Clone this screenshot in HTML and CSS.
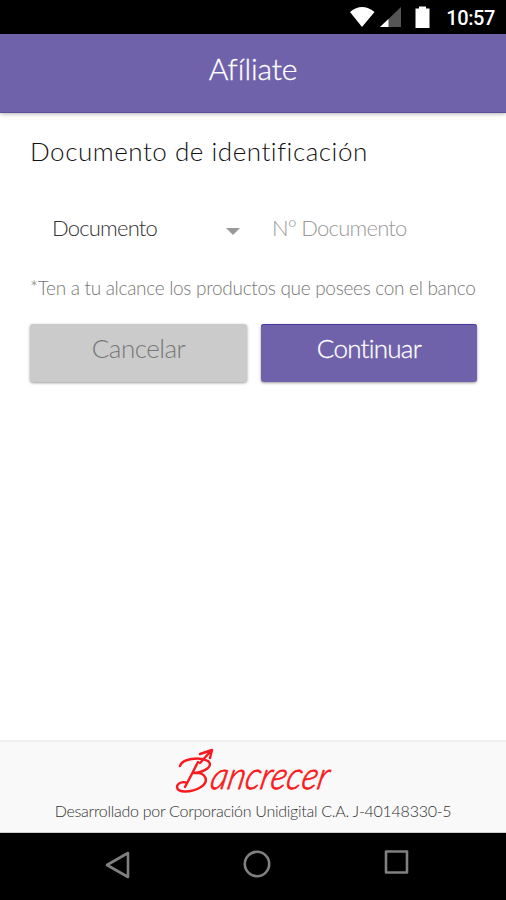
FILE: index.html
```html
<!DOCTYPE html>
<html lang="es">
<head>
<meta charset="utf-8">
<title>Afíliate</title>
<link rel="stylesheet" href="styles.css">
</head>
<body>
<div class="status">
  <svg class="status-icons" width="84" height="34" viewBox="0 0 84 34">
    <path d="M0 12Q12 2 24.500 12L12 27Z" fill="#fff"/>
    <path d="M30 27L51 7V27Z" fill="#555"/>
    <path d="M30 27L38.500 19V27Z" fill="#fff"/>
    <path d="M65.500 8.500H69V6.500H76V8.500H79.500V28H65.500Z" fill="#fff"/>
  </svg>
  <span class="clock">10:57</span>
</div>
<header class="bar"><h1 class="title">Afíliate</h1></header>
<main class="content">
  <h2 class="heading">Documento de identificación</h2>
  <div class="fields">
    <div class="select"><span class="value">Documento</span><span class="caret"></span></div>
    <div class="placeholder">N° Documento</div>
  </div>
  <p class="note">*Ten a tu alcance los productos que posees con el banco</p>
  <div class="actions">
    <button class="btn cancel">Cancelar</button>
    <button class="btn go">Continuar</button>
  </div>
</main>
<footer class="footer">
  <svg class="logo" width="170" height="52" viewBox="0 0 170 52">
    <g fill="none" stroke="#f91a20" stroke-width="2.400" stroke-linecap="round" stroke-linejoin="round">
      <path d="M27 16L37 5M27 7L39 3L37 11"/>
      <path d="M7 19C9 12 26 9 35 14C41 19 32 25 21 26C34 25 36 35 28 40C18 46 4 46 4 40C4 36 10 34 14 36M25 15Q18 29 12 40"/>
    </g>
    <text class="wordmark" transform="translate(36 42) skewX(-12)" textLength="118" lengthAdjust="spacingAndGlyphs">ancrecer</text>
  </svg>
  <p class="credit">Desarrollado por Corporación Unidigital C.A. J-40148330-5</p>
</footer>
<nav class="nav">
  <svg width="506" height="67" viewBox="0 0 506 67" fill="none" stroke="#808080" stroke-width="2.600" stroke-linejoin="round">
    <path d="M107 32L128 20V44Z"/>
    <circle cx="257" cy="31" r="12.200"/>
    <rect x="386" y="18.500" width="21" height="21"/>
  </svg>
</nav>
</body>
</html>
```
FILE: styles.css
```css
* { box-sizing: border-box; }
body {
  margin: 0;
  height: 900px;
  display: flex;
  flex-direction: column;
  background: #fff;
  font-family: Lato, sans-serif;
  font-weight: 300;
  font-variant-ligatures: none;
  white-space: nowrap;
  overflow: hidden;
}
h1, h2, p { margin: 0; font-weight: 300; }
.status {
  height: 34px;
  flex: none;
  background: #000;
  display: flex;
  align-items: center;
  justify-content: flex-end;
  padding-right: 11px;
}
.status-icons { margin-right: 12px; }
.clock {
  color: #fff;
  font: 500 20px/34px Roboto, sans-serif;
  letter-spacing: -.4px;
  padding-top: 2px;
}
.bar {
  height: 79px;
  flex: none;
  background: #7062aa;
  border-bottom: 1px solid #5d4d9c;
  box-shadow: 0 1px 4px rgba(0, 0, 0, .3);
  text-align: center;
}
.title {
  color: #fff;
  font-size: 30px;
  line-height: 69px;
  letter-spacing: -.15px;
  -webkit-text-stroke: .3px #fff;
}
.content { flex: 1; padding: 21px 29px 0 30px; }
.heading { font-size: 26px; line-height: 34px; color: #111; letter-spacing: .53px; }
.fields {
  display: flex;
  margin-top: 42px;
  height: 36px;
  line-height: 36px;
  font-size: 22px;
}
.select {
  width: 242px;
  padding: 0 32px 0 22px;
  display: flex;
  align-items: center;
  justify-content: space-between;
  color: #333;
  letter-spacing: -.8px;
}
.caret {
  border: 7px solid transparent;
  border-top-color: #999;
  border-bottom: 0;
  margin-top: 6px;
}
.placeholder { color: #999; letter-spacing: -.78px; }
.note { margin-top: 30px; font-size: 19px; line-height: 24px; color: #777; letter-spacing: -.3px; }
.actions { display: grid; grid-template-columns: 217px 216px; gap: 14px; margin-top: 24px; }
.btn {
  height: 58px;
  border: 0;
  border-radius: 3px;
  padding: 0 0 9px;
  font: 300 26px/49px Lato, sans-serif;
  letter-spacing: -.5px;
  box-shadow: 0 1px 3px rgba(0, 0, 0, .4);
}
.cancel { background: #cbcbcb; color: #777; }
.go {
  background: #7062aa;
  color: #fff;
  letter-spacing: -.75px;
  -webkit-text-stroke: .3px #fff;
  box-shadow: inset 0 1px #503ca0, 0 1px 3px rgba(0, 0, 0, .4);
}
.footer {
  height: 93px;
  flex: none;
  background: #f9f9f9;
  border-top: 2px solid #eee;
  border-bottom: 1px solid #ccc;
  text-align: center;
}
.logo { display: block; margin: 5px auto 0 173px; }
.wordmark {
  font: italic 300 38px Lato, sans-serif;
  fill: #f91a20;
  stroke: #f91a20;
  stroke-width: .8px;
}
.credit { font-size: 16px; line-height: 24px; color: #333; letter-spacing: -.27px; }
.nav { height: 67px; flex: none; background: #000; }
.nav svg { display: block; }
```
